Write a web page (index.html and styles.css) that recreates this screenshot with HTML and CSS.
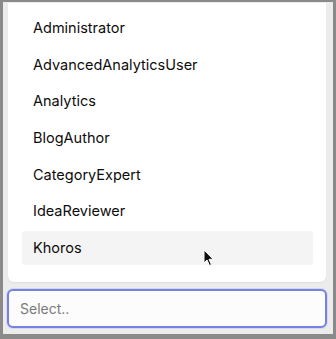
FILE: index.html
```html
<!DOCTYPE html>
<html lang="en">
<head>
  <meta charset="UTF-8">
  <title>Role Select</title>
  <link rel="stylesheet" href="styles.css">
</head>
<body>
  <div class="frame">
    <div class="menu">
      <ul class="options">
        <li class="option">Administrator</li>
        <li class="option">AdvancedAnalyticsUser</li>
        <li class="option">Analytics</li>
        <li class="option">BlogAuthor</li>
        <li class="option">CategoryExpert</li>
        <li class="option">IdeaReviewer</li>
        <li class="option focused">Khoros</li>
      </ul>
    </div>
    <input class="select-input" type="text" placeholder="Select..">

    <!-- mouse pointer over the focused option -->
    <svg class="pointer" width="12" height="18" viewBox="0 0 12 18">
      <path d="M1 1 L1 14 L4 11 L6.5 16.5 L8.5 15.6 L6 10.3 L10.2 10.3 Z" fill="#111" stroke="#fff" stroke-width="1"/>
    </svg>
  </div>
</body>
</html>
```

FILE: styles.css
```css
* {
  box-sizing: border-box;
}

body {
  margin: 0;
  font-family: Inter, "Noto Sans", sans-serif;
  background: #ececec;
}

.frame {
  position: relative;
  width: 336px;
  height: 339px;
  border: 3px solid #8a8a8a;
  border-top-width: 2px;
  border-bottom-width: 5px;
  background: #ececec;
  display: flex;
  flex-direction: column;
  padding-top: 1px;
}

.menu {
  margin: 0 7px 0 5px;
  height: 279px;
  background: #fff;
  border-radius: 0 0 6px 6px;
  box-shadow: 0 1px 2px rgba(0, 0, 0, 0.06);
}

.options {
  list-style: none;
  margin: 0;
  padding: 8px 13px 0 14px;
  display: flex;
  flex-direction: column;
  gap: 2.67px;
}

.option {
  height: 34px;
  line-height: 34px;
  padding-left: 11px;
  font-size: 14.5px;
  color: #0d0d0d;
  border-radius: 3px;
}

.option.focused {
  background: #f4f4f4;
}

.select-input {
  margin: 7px 6px 0 4px;
  height: 39px;
  border: 2px solid #7482e0;
  border-radius: 6px;
  padding: 0 11px;
  font-family: Inter, "Noto Sans", sans-serif;
  font-size: 14px;
  color: #222;
  background: #fcfcfc;
  box-shadow: 0 0 0 1px rgba(116, 130, 224, 0.18);
  outline: none;
}

.select-input::placeholder {
  color: #7a7a7a;
}

.pointer {
  position: absolute;
  left: 200px;
  top: 247px;
}
```
